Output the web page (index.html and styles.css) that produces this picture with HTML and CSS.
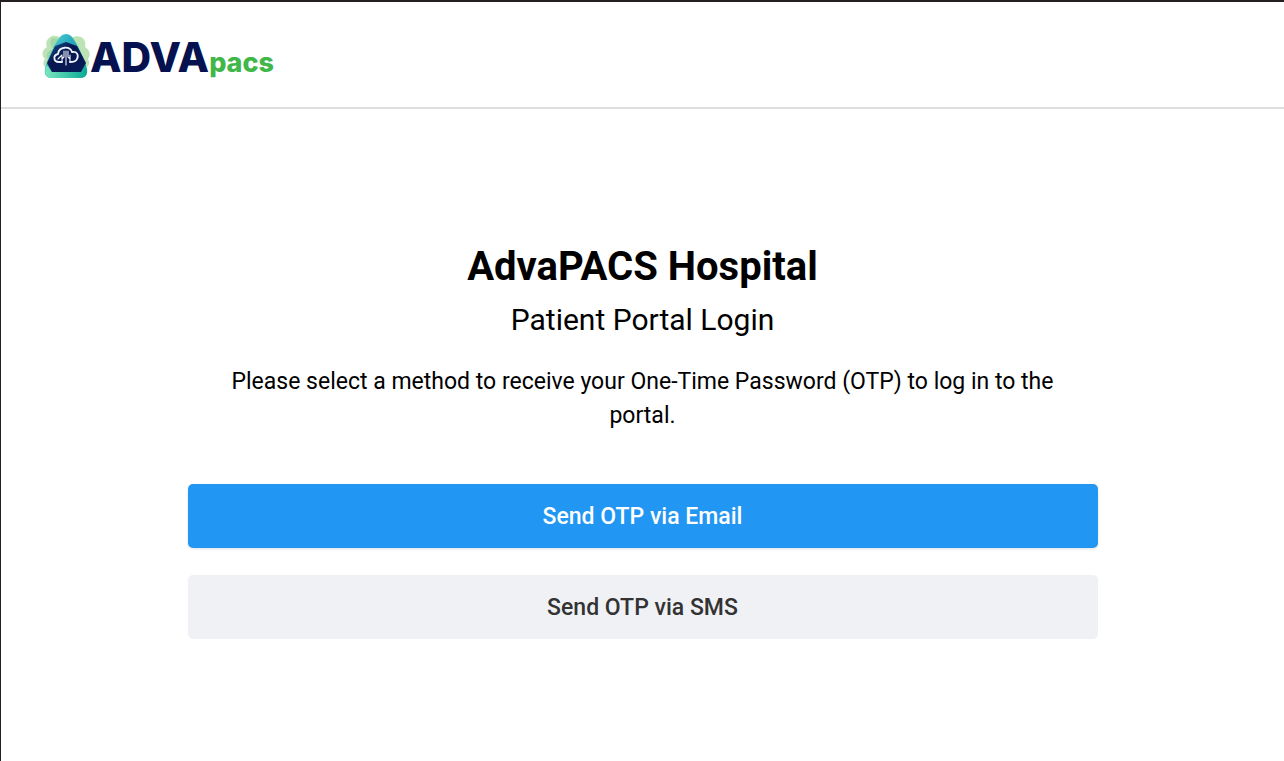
FILE: index.html
```html
<!DOCTYPE html>
<html lang="en">
  <head>
    <meta charset="UTF-8" />
    <meta name="viewport" content="width=device-width, initial-scale=1.0" />
    <title>Patient Portal Login</title>
    <link rel="stylesheet" href="styles.css">
  </head>

  <body>
    <header class="header">
      <a class="logo" href="#">
        <svg class="logo-icon" viewBox="0 0 48 46" aria-hidden="true">
          <defs>
            <linearGradient id="teal" x1="0" y1="0" x2="1" y2="1">
              <stop offset="0" stop-color="#5fdcdc" />
              <stop offset="0.4" stop-color="#27a9bd" />
              <stop offset="1" stop-color="#14ae96" />
            </linearGradient>
            <linearGradient id="base" x1="0" y1="0" x2="1" y2="0">
              <stop offset="0" stop-color="#7ae6bd" />
              <stop offset="1" stop-color="#0ba997" />
            </linearGradient>
            <linearGradient id="navy" x1="0" y1="0" x2="1" y2="1">
              <stop offset="0" stop-color="#0f5f94" />
              <stop offset="0.4" stop-color="#08164f" />
              <stop offset="1" stop-color="#061d58" />
            </linearGradient>
          </defs>
          <path fill="#bce2b6" d="M10 3C14 2 18 4 24 7C30 4 35 2 39 4C43 6 44 10 43 14C48 17 49 22 46 26C49 31 46 35 41 35H7C1 35 0 30 3 26C-1 22 0 17 5 14C3 10 5 5 10 3Z" />
          <path fill="#92d3a2" d="M10 5C7 10 9 14 12 16C5 18 3 22 6 26C3 30 4 33 8 35L19 6Z" opacity="0.7" />
          <path fill="url(#teal)" d="M18 4C21 0 27 0 30 4C36 12 42 25 45 36C46 42 43 45 38 45H10C5 45 2 42 3 36C6 25 12 12 18 4Z" />
          <path fill="url(#base)" d="M5 32L10 39H40L43 32C47 40 44 45 38 45H10C4 45 1 40 5 32Z" />
          <path fill="url(#navy)" d="M24 9L35 13L44 30L39 39H10L5 30L13 13Z" />
          <g fill="none" stroke="#eef2fa" stroke-linecap="round">
            <path stroke-width="1.8" d="M20 29H17C11 29 11 22 16 21C17 13 28 13 30 19C35 18 37 22 35 26C34 29 31 29 28 29" />
            <path stroke-width="1.1" d="M16 26L20 22M20 29V23M22 18V24L20 26M24 18V32M26 18V24L28 26M28 29V22" />
          </g>
        </svg>
        <span class="logo-name">ADVA</span>
        <span class="logo-product">pacs</span>
      </a>
    </header>

    <main class="login">
      <h1 class="login-title">AdvaPACS Hospital</h1>
      <h2 class="login-subtitle">Patient Portal Login</h2>
      <p class="login-text">
        Please select a method to receive your One-Time Password (OTP) to log in to the portal.
      </p>
      <div class="login-actions">
        <button type="button" class="btn btn-primary">Send OTP via Email</button>
        <button type="button" class="btn btn-secondary">Send OTP via SMS</button>
      </div>
    </main>
  </body>
</html>
```

FILE: styles.css
```css
* {
  box-sizing: border-box;
}

body {
  margin: 0;
  min-height: 100vh;
  border-top: 2px solid #231f20;
  border-left: 1px solid #231f20;
  background-color: #fff;
  color: #000;
  font-family: Roboto, "Liberation Sans", sans-serif;
}

.header {
  padding: 31px 41px 26px;
  border-bottom: 2px solid #dedede;
}

.logo {
  display: flex;
  align-items: baseline;
  width: fit-content;
  color: #06114f;
  font-family: Inter, "Liberation Sans", sans-serif;
  font-weight: 800;
  text-decoration: none;
}

.logo-icon {
  align-self: flex-start;
  width: 48px;
  height: 46px;
}

.logo-name {
  font-size: 41px;
  line-height: 48px;
}

.logo-product {
  color: #41b649;
  font-size: 27px;
  line-height: 27px;
}

.login {
  max-width: 990px;
  margin: 0 auto;
  padding: 134px 40px 40px;
  text-align: center;
}

.login-title {
  margin: 0;
  font-size: 40px;
  font-weight: 700;
  line-height: 48px;
}

.login-subtitle {
  margin: 11px 0 0;
  font-size: 30px;
  font-weight: 400;
  line-height: 36px;
}

.login-text {
  margin: 27px 0 0;
  padding: 0 32px;
  font-size: 23px;
  line-height: 34px;
}

.login-actions {
  display: flex;
  flex-direction: column;
  gap: 27px;
  margin-top: 51px;
}

.btn {
  width: 100%;
  height: 64px;
  border: none;
  border-radius: 5px;
  font-family: inherit;
  font-size: 23px;
  font-weight: 500;
  cursor: pointer;
}

.btn-primary {
  background-color: #2196f3;
  box-shadow: 0 1px 3px rgba(0, 0, 0, 0.12);
  color: #fff;
}

.btn-secondary {
  background-color: #f0f1f5;
  color: #333;
}
```
